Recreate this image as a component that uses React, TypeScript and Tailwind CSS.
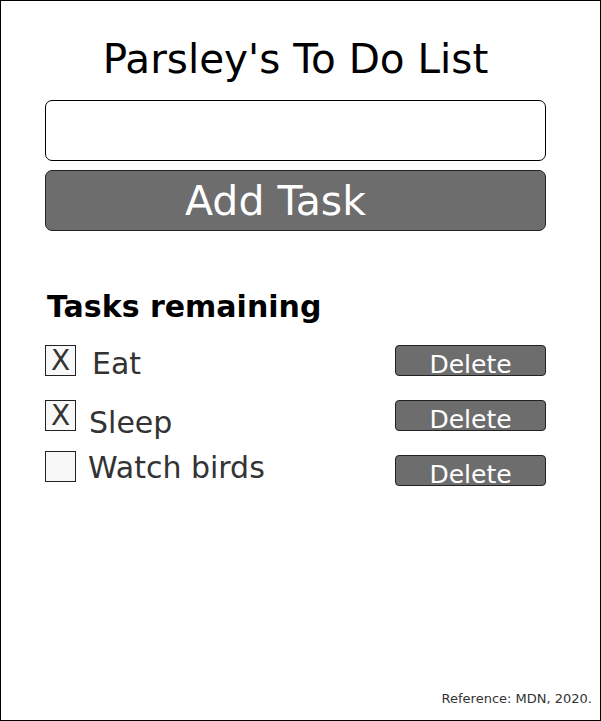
import React from "react";

const tasks = [
  { name: "Eat", done: true, rowH: "h-[55px]", textCls: "ml-[16px] mt-[2px]", delCls: "mt-0" },
  { name: "Sleep", done: true, rowH: "h-[51px]", textCls: "ml-[13px] mt-[6px]", delCls: "mt-0" },
  { name: "Watch birds", done: false, rowH: "h-[40px]", textCls: "ml-[12px] mt-0", delCls: "mt-[4px]" },
];

export default function App() {
  return (
    <div
      className="w-[601px] h-[721px] border border-black bg-white flex flex-col"
      style={{ fontFamily: '"DejaVu Sans", Verdana, sans-serif' }}
    >
      <div className="flex flex-col pl-[44px] pr-[54px] flex-1">
        <h1 className="text-center text-[40.5px] leading-[48px] mt-[34px] text-black">
          Parsley's To Do List
        </h1>
        <input
          type="text"
          className="mt-[17px] h-[61px] w-full rounded-[7px] border border-black bg-white"
        />
        <button className="mt-[9px] h-[61px] w-full rounded-[7px] border border-[#222] bg-[#6d6d6d] text-white text-[41px] leading-[48px] pr-[40px]">
          Add Task
        </button>
        <h2 className="mt-[59px] ml-[2px] text-[30px] leading-[34px] font-bold text-black">
          Tasks remaining
        </h2>
        <ul className="mt-[21px] flex flex-col">
          {tasks.map((t) => (
            <li key={t.name} className={`flex items-start justify-between ${t.rowH}`}>
              <div className="flex items-start">
                <span className="w-[31px] h-[31px] border border-[#222] bg-[#f8f8f8] flex items-center justify-center text-[28px] leading-none text-[#333]">
                  {t.done ? "X" : ""}
                </span>
                <span className={`${t.textCls} text-[30px] leading-[34px] text-[#333]`}>
                  {t.name}
                </span>
              </div>
              <button
                className={`${t.delCls} w-[151px] h-[31px] rounded-[4px] border border-[#222] bg-[#6d6d6d] text-white text-[25px] leading-[30px] pt-[4px]`}
              >
                Delete
              </button>
            </li>
          ))}
        </ul>
      </div>
      <div className="text-right pr-[8px] pb-[12px] text-[13px] text-[#333]">
        Reference: MDN, 2020.
      </div>
    </div>
  );
}
